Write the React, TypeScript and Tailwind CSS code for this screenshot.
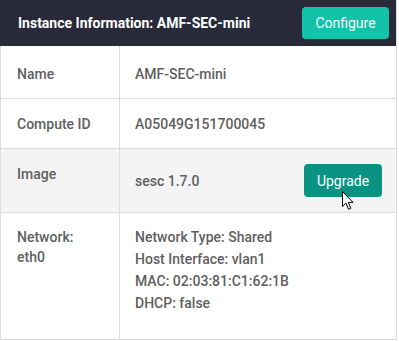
import React from "react";

const font = { fontFamily: "Roboto, 'Liberation Sans', sans-serif" };

function Cursor() {
  return (
    <svg
      className="absolute left-[342px] top-[191px]"
      width="13"
      height="20"
      viewBox="0 0 13 20"
    >
      <path
        d="M0.5 0.5 L0.5 15.5 L4 12.2 L6.6 18.3 L8.8 17.4 L6.3 11.4 L11 11.4 Z"
        fill="#fff"
        stroke="#000"
        strokeWidth="1"
        strokeLinejoin="miter"
      />
    </svg>
  );
}

export default function App() {
  return (
    <div className="relative w-[399px] h-[341px] bg-white" style={font}>
      <div className="w-[397px] h-[340px] border border-[#dcdcdc] border-t-0 border-l-0 flex flex-col">
        {/* header */}
        <div className="h-[46px] bg-[#282a3a] flex items-center justify-between pl-[17px] pr-[7px] border-l border-[#282a3a]">
          <span className="text-white font-bold text-[14px]">
            Instance Information: AMF-SEC-mini
          </span>
          <button className="w-[87px] h-[32px] rounded-[4px] bg-[#12c2a9] text-white text-[14px]">
            Configure
          </button>
        </div>

        <div className="flex-1 border-l border-[#dcdcdc] flex flex-col text-[14px] font-medium text-[#5f5f5f] leading-[22px]">
          {/* Name */}
          <div className="flex h-[53px] border-b border-[#dcdcdc]">
            <div className="w-[119px] border-r border-[#dcdcdc] pl-[16px] pt-[17px]">Name</div>
            <div className="flex-1 pl-[15px] pt-[17px]">AMF-SEC-mini</div>
          </div>

          {/* Compute ID */}
          <div className="flex h-[50px] border-b border-[#dcdcdc]">
            <div className="w-[119px] border-r border-[#dcdcdc] pl-[16px] pt-[14px]">Compute ID</div>
            <div className="flex-1 pl-[15px] pt-[14px]">A05049G151700045</div>
          </div>

          {/* Image */}
          <div className="flex h-[64px] border-b border-[#dcdcdc] bg-[#f4f4f4]">
            <div className="w-[119px] border-r border-[#dcdcdc] pl-[16px] pt-[14px]">Image</div>
            <div className="flex-1 pl-[15px] pr-[14px] flex items-center justify-between">
              <span className="pt-[1px]">sesc 1.7.0</span>
              <button className="w-[78px] h-[33px] rounded-[4px] bg-[#0a9383] text-white text-[14px] font-normal">
                Upgrade
              </button>
            </div>
          </div>

          {/* Network */}
          <div className="flex flex-1">
            <div className="w-[119px] border-r border-[#dcdcdc] pl-[16px] pt-[13px]">
              <div>Network:</div>
              <div className="-mt-[2px]">eth0</div>
            </div>
            <div className="flex-1 pl-[15px] pt-[13px]">
              <div>Network Type: Shared</div>
              <div>Host Interface: vlan1</div>
              <div>MAC: 02:03:81:C1:62:1B</div>
              <div>DHCP: false</div>
            </div>
          </div>
        </div>
      </div>
      <Cursor />
    </div>
  );
}
